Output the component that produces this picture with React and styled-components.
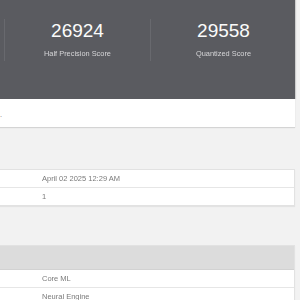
import React from "react";
import styled, { createGlobalStyle } from "styled-components";

const Global = createGlobalStyle`
  html, body {
    margin: 0;
    padding: 0;
    background: #f2f2f2;
    font-family: "Liberation Sans", Arial, sans-serif;
    -webkit-font-smoothing: antialiased;
    overflow: hidden;
  }
`;

const Page = styled.div`
  width: 295px;
  display: flex;
  flex-direction: column;
`;

const Header = styled.div`
  height: 99px;
  background: #5a5b60;
  box-shadow: 1px 0 1px rgba(0, 0, 0, 0.15);
  padding-top: 19px;
  box-sizing: border-box;
`;

const Scores = styled.div`
  display: flex;
  margin-left: 4px;
`;

const Score = styled.div`
  width: 146px;
  height: 42px;
  flex-shrink: 0;
  border-left: 1px solid rgba(255, 255, 255, 0.09);
  display: flex;
  flex-direction: column;
  align-items: center;
  box-sizing: border-box;
`;

const Value = styled.div`
  color: #fbfbfb;
  font-size: 19px;
  line-height: 22px;
  margin-top: 1px;
`;

const Label = styled.div`
  color: #d6d6d8;
  font-size: 7.4px;
  margin-top: 7px;
  transform: translateZ(0);
`;

const Info = styled.div`
  height: 28px;
  background: #fff;
  box-shadow: 0 1px 1px rgba(0, 0, 0, 0.12);
  display: flex;
  align-items: center;
  color: #777;
  font-size: 7.4px;
  padding-top: 3px;
  box-sizing: border-box;
`;

const Card = styled.div`
  margin-top: ${(p) => p.$gap}px;
  background: #fff;
  border: 1px solid #e2e2e2;
  border-left: none;
  box-shadow: 0 1px 1px rgba(0, 0, 0, 0.06);
`;

const CardHead = styled.div`
  height: 23px;
  background: #dcdcdc;
  border-bottom: 1px solid #d2d2d2;
`;

const Row = styled.div`
  height: 17px;
  display: flex;
  align-items: center;
  padding-left: 42px;
  color: #7a7a7a;
  font-size: 7.5px;
  transform: translateZ(0);
  & + & {
    border-top: 1px solid #e6e6e6;
  }
`;

export default function App() {
  return (
    <Page>
      <Global />
      <Header>
        <Scores>
          <Score>
            <Value>26924</Value>
            <Label>Half Precision Score</Label>
          </Score>
          <Score>
            <Value>29558</Value>
            <Label>Quantized Score</Label>
          </Score>
        </Scores>
      </Header>
      <Info>.</Info>
      <Card $gap={42}>
        <Row>April 02 2025 12:29 AM</Row>
        <Row>1</Row>
      </Card>
      <Card $gap={39}>
        <CardHead />
        <Row>Core ML</Row>
        <Row>Neural Engine</Row>
      </Card>
    </Page>
  );
}
